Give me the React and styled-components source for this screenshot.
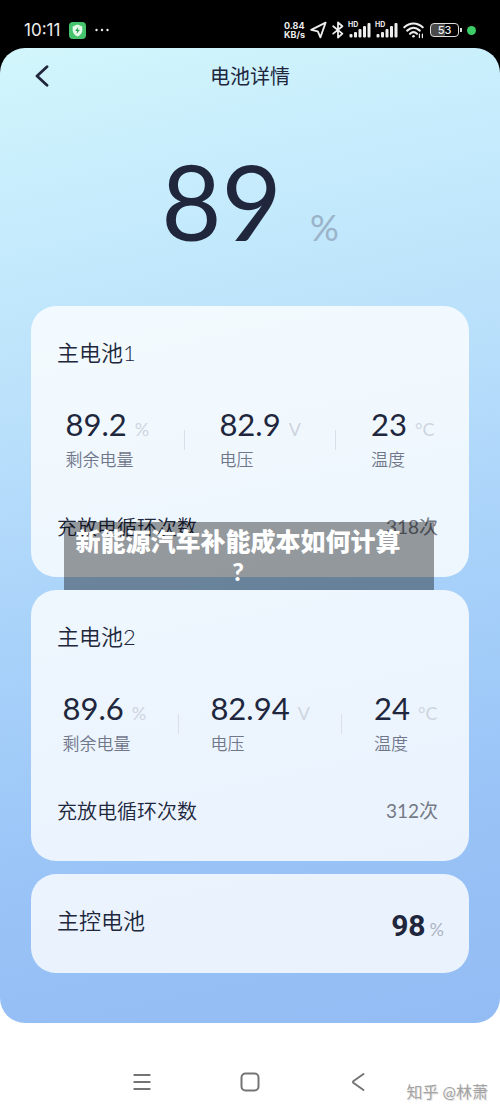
import { Fragment } from "react";
import styled, { createGlobalStyle } from "styled-components";

const GlobalStyle = createGlobalStyle`
  * {
    box-sizing: border-box;
  }

  body {
    margin: 0;
    background: white;
    font-family: Lato, "Noto Sans CJK SC", sans-serif;
    color: #20263c;
  }
`

const StatusBar = styled.header`
  display: flex;
  align-items: center;
  justify-content: space-between;
  height: 60px;
  padding: 0 24px;
  background: black;
  color: #eeeeee;
  font-family: Inter, sans-serif;
`

const StatusGroup = styled.div`
  display: flex;
  align-items: center;
  gap: ${props => props.$gap}px;

  svg {
    display: block;
  }
`

const Clock = styled.time`
  font-size: 17px;
  line-height: 20px;
`

const Speed = styled.div`
  font-size: 9px;
  font-weight: 700;
  line-height: 9px;
`

// the bar runs on behind the rounded corners of the screen
const Backdrop = styled.div`
  margin-top: -12px;
  background: linear-gradient(black 50%, white 50%);
`

const Screen = styled.main`
  padding-bottom: 50px;
  border-radius: 25px;
  background: linear-gradient(168deg, #d2f6fb 0%, #c6ecfd 16%, #bce2fb 32%, #a9d2fa 55%, #9ac4f7 78%, #92bcf3 100%);
`

const TitleBar = styled.div`
  display: grid;
  grid-template-columns: 1fr auto 1fr;
  align-items: center;
  height: 56px;
  padding: 0 30px;
`

const IconButton = styled.button`
  display: flex;
  align-items: center;
  justify-content: center;
  justify-self: start;
  width: 24px;
  height: 32px;
  padding: 0;
  border: 0;
  background: none;
  color: ${props => props.$color};
  cursor: pointer;
`

const PageTitle = styled.h1`
  margin: 0;
  font-size: 20px;
  font-weight: 400;
  line-height: 28px;
`

const Hero = styled.div`
  display: flex;
  align-items: baseline;
  justify-content: center;
  gap: 28px;
  padding: 37px 0 45px;
`

const HeroValue = styled.span`
  font-size: 104px;
  line-height: 120px;
`

const HeroUnit = styled.span`
  font-size: 36px;
  line-height: 40px;
  color: #9ab3c8;
`

const CardList = styled.div`
  position: relative;
  display: flex;
  flex-direction: column;
  gap: 13px;
  margin: 0 31px;
`

const Card = styled.section`
  padding: 30px 0 35px;
  border-radius: 25px;
  background: rgba(255, 255, 255, 0.8);
`

const CardTitle = styled.h2`
  margin: 0;
  padding: 0 26px;
  font-size: 22px;
  font-weight: 350;
  line-height: 34px;
`

const Metrics = styled.div`
  display: flex;
  align-items: center;
  justify-content: space-evenly;
  margin: 34px 0 36px;
`

const Divider = styled.div`
  width: 1px;
  height: 20px;
  background: #dadfe9;
`

const Reading = styled.div`
  display: flex;
  align-items: baseline;
  gap: ${props => props.$gap}px;
`

const Value = styled.span`
  font-size: 31px;
  line-height: 40px;
`

const Unit = styled.span`
  font-size: 18px;
  line-height: 24px;
  color: ${props => props.$color || "#cfd4de"};
`

const Label = styled.div`
  font-size: 17px;
  font-weight: 350;
  line-height: 32px;
  color: #71778a;
`

const CycleRow = styled.div`
  display: flex;
  justify-content: space-between;
  padding: 0 31px 0 26px;
  font-size: 20px;
  font-weight: 350;
  line-height: 30px;
`

const CycleCount = styled.span`
  font-size: 19px;
  font-weight: 400;
  color: #737985;
`

const ControlCard = styled(Card)`
  display: flex;
  justify-content: space-between;
  padding: 30px 25px 25px 0;
`

const ControlValue = styled.strong`
  font-family: Roboto, sans-serif;
  font-size: 30px;
  font-weight: 700;
  line-height: 44px;
`

const Caption = styled.div`
  position: absolute;
  top: 216px;
  left: 33px;
  right: 35px;
  padding: 4px 22px 4px 0;
  background: rgba(0, 0, 0, 0.38);
  color: white;
  font-size: 25px;
  font-weight: 900;
  line-height: 30px;
  text-align: center;
`

const NavBar = styled.nav`
  position: relative;
  display: flex;
  justify-content: center;
  gap: 84px;
  padding: 43px 0 14px;
`

const Watermark = styled.div`
  position: absolute;
  right: 12px;
  bottom: 8px;
  font-size: 16px;
  line-height: 24px;
  color: #a3a3a3;
  text-shadow: 1px 1px 1px #dddddd;
`

const batteries = [
  {
    name: "主电池1",
    metrics: [
      {value: "89.2", unit: "%", label: "剩余电量"},
      {value: "82.9", unit: "V", label: "电压"},
      {value: "23", unit: "°C", label: "温度"},
    ],
    cycles: 318,
  },
  {
    name: "主电池2",
    metrics: [
      {value: "89.6", unit: "%", label: "剩余电量"},
      {value: "82.94", unit: "V", label: "电压"},
      {value: "24", unit: "°C", label: "温度"},
    ],
    cycles: 312,
  },
]

const ShieldIcon = () => (
  <svg width="17" height="17" viewBox="0 0 17 17">
    <rect width="17" height="17" rx="4" fill="#45c46d"/>
    <path d="M8.5 2.6 13.3 4.4V8.3C13.3 11.2 11.3 13.5 8.5 14.6 5.7 13.5 3.7 11.2 3.7 8.3V4.4Z" fill="#e6faeb"/>
    <path d="M9.3 4.9 6.1 9.1H8.2L7.6 12.1 10.9 7.8H8.8Z" fill="#2f9f55"/>
  </svg>
)

const MoreIcon = () => (
  <svg width="14" height="4" viewBox="0 0 14 4" fill="#eeeeee">
    <circle cx="1.5" cy="2" r="1.2"/>
    <circle cx="7" cy="2" r="1.2"/>
    <circle cx="12.5" cy="2" r="1.2"/>
  </svg>
)

const LocationIcon = () => (
  <svg width="17" height="18" viewBox="0 0 17 18" fill="none" stroke="#eeeeee" strokeWidth="1.8" strokeLinejoin="round">
    <path d="M15.6 1.6 1.2 8.9 7.8 10.3 10.4 16.4Z"/>
  </svg>
)

const BluetoothIcon = () => (
  <svg width="12" height="18" viewBox="0 0 12 18" fill="none" stroke="#eeeeee" strokeWidth="1.8" strokeLinejoin="round" strokeLinecap="round">
    <path d="M1.2 5.2 10.4 12.6 6 16.6V1.4L10.4 5.2 1.2 12.6"/>
  </svg>
)

const Signal = styled.div`
  position: relative;
`

const SignalTag = styled.span`
  position: absolute;
  top: -1px;
  left: -1px;
  font-size: 7px;
  font-weight: 700;
  line-height: 7px;
`

const SignalIcon = () => (
  <Signal>
    <SignalTag>HD</SignalTag>
    <svg width="22" height="16" viewBox="0 0 22 16" fill="#eeeeee">
      <rect x="0.5" y="12" width="3" height="3.5" rx="1"/>
      <rect x="5" y="10" width="3" height="5.5" rx="1"/>
      <rect x="9.5" y="7" width="3" height="8.5" rx="1"/>
      <rect x="14" y="4" width="3" height="11.5" rx="1"/>
      <rect x="18.5" y="1" width="3" height="14.5" rx="1"/>
    </svg>
  </Signal>
)

const WifiIcon = () => (
  <svg width="22" height="17" viewBox="0 0 22 17" fill="none" stroke="#eeeeee" strokeWidth="2.1" strokeLinecap="round">
    <path d="M1.3 5.3C6.8.2 14.2.2 19.7 5.3"/>
    <path d="M4.2 8.6C8.2 5 12.8 5 16.8 8.6"/>
    <path d="M7 11.8C9.2 9.8 11.8 9.8 14 11.8"/>
    <circle cx="10.5" cy="14.3" r="1.3" fill="#eeeeee" stroke="none"/>
    <path d="M16.4 12.2V15.6M19.4 12.2V15.6" strokeWidth="1.2"/>
  </svg>
)

const Battery = styled.div`
  position: relative;
  display: flex;
  align-items: center;
  justify-content: center;
  width: 29px;
  height: 14px;
  margin-right: 3px;
  border: 1px solid #dddddd;
  border-radius: 4px;
  background: linear-gradient(90deg, #4a4a4a 53%, black 53%);
  font-size: 11px;
  font-weight: 500;
  line-height: 12px;

  &::after {
    content: "";
    position: absolute;
    right: -4px;
    width: 2px;
    height: 4px;
    background: #dddddd;
  }
`

const LiveDot = styled.div`
  width: 9px;
  height: 9px;
  border-radius: 50%;
  background: #3ccc68;
`

const BatteryCard = ({battery}) => (
  <Card>
    <CardTitle>{battery.name}</CardTitle>
    <Metrics>
      {battery.metrics.map((metric, i) => (
        <Fragment key={metric.label}>
          {i > 0 && <Divider/>}
          <div>
            <Reading $gap={8}>
              <Value>{metric.value}</Value>
              <Unit>{metric.unit}</Unit>
            </Reading>
            <Label>{metric.label}</Label>
          </div>
        </Fragment>
      ))}
    </Metrics>
    <CycleRow>
      <span>充放电循环次数</span>
      <CycleCount>{battery.cycles}次</CycleCount>
    </CycleRow>
  </Card>
)

const App = () => {
  return (
    <>
      <GlobalStyle/>
      <StatusBar>
        <StatusGroup $gap={9}>
          <Clock>10:11</Clock>
          <ShieldIcon/>
          <MoreIcon/>
        </StatusGroup>
        <StatusGroup $gap={5}>
          <Speed>0.84<br/>KB/s</Speed>
          <LocationIcon/>
          <BluetoothIcon/>
          <SignalIcon/>
          <SignalIcon/>
          <WifiIcon/>
          <Battery>53</Battery>
          <LiveDot/>
        </StatusGroup>
      </StatusBar>
      <Backdrop>
        <Screen>
          <TitleBar>
            <IconButton $color="#20263c" aria-label="返回">
              <svg width="14" height="22" viewBox="0 0 14 22" fill="none" stroke="currentColor" strokeWidth="2.8" strokeLinecap="round" strokeLinejoin="round">
                <path d="M12 1.8 2 11 12 20.2"/>
              </svg>
            </IconButton>
            <PageTitle>电池详情</PageTitle>
          </TitleBar>
          <Hero>
            <HeroValue>89</HeroValue>
            <HeroUnit>%</HeroUnit>
          </Hero>
          <CardList>
            {batteries.map(battery => <BatteryCard key={battery.name} battery={battery}/>)}
            <ControlCard>
              <CardTitle>主控电池</CardTitle>
              <Reading $gap={4}>
                <ControlValue>98</ControlValue>
                <Unit $color="#adb4c4">%</Unit>
              </Reading>
            </ControlCard>
            <Caption>新能源汽车补能成本如何计算<br/>?</Caption>
          </CardList>
        </Screen>
      </Backdrop>
      <NavBar>
        <IconButton $color="#747474" aria-label="菜单">
          <svg width="18" height="18" viewBox="0 0 18 18" stroke="currentColor" strokeWidth="2" strokeLinecap="round">
            <path d="M1.3 2H16.7M1.3 9H16.7M1.3 16H16.7"/>
          </svg>
        </IconButton>
        <IconButton $color="#747474" aria-label="主页">
          <svg width="20" height="20" viewBox="0 0 20 20" fill="none" stroke="currentColor" strokeWidth="2">
            <rect x="1.5" y="1.5" width="17" height="17" rx="4"/>
          </svg>
        </IconButton>
        <IconButton $color="#747474" aria-label="后退">
          <svg width="14" height="20" viewBox="0 0 14 20" fill="none" stroke="currentColor" strokeWidth="2" strokeLinecap="round" strokeLinejoin="round">
            <path d="M12.5 2 2.6 9Q1.4 10 2.6 11L12.5 18"/>
          </svg>
        </IconButton>
        <Watermark>知乎 @林萧</Watermark>
      </NavBar>
    </>
  )
}

export default App
